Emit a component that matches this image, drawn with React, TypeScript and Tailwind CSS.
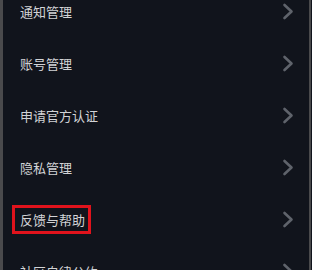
const items = ['通知管理', '账号管理', '申请官方认证', '隐私管理', '反馈与帮助', '社区自律公约'];

function Chevron() {
  return (
    <svg width="12" height="17" viewBox="0 0 12 17" className="shrink-0">
      <path d="M2.5 2 L9.5 8.5 L2.5 15" fill="none" stroke="#5f636b" strokeWidth="2.6" strokeLinecap="round" strokeLinejoin="round" />
    </svg>
  );
}

export default function App() {
  return (
    <div className="w-[312px] h-[270px] overflow-hidden flex bg-[#11141c]" style={{ fontFamily: '"Noto Sans CJK SC", "Noto Sans", sans-serif' }}>
      <div className="w-[3px] shrink-0 bg-[#4a4a4c]" />
      <div className="flex-1 flex flex-col -mt-[15px]">
        {items.map((label, i) => (
          <div key={label} className="h-[52px] shrink-0 flex items-center justify-between pl-[17px] pr-[15px]">
            {i === 4 ? (
              <span className="-ml-[8px] border-[3px] border-[#e0131c] pl-[5px] pr-[3px] py-[4px] text-[13px] leading-[15px] text-[#d2d3d6]">
                {label}
              </span>
            ) : (
              <span className="text-[13px] leading-[15px] text-[#d2d3d6]">{label}</span>
            )}
            <Chevron />
          </div>
        ))}
      </div>
      <div className="w-[2px] shrink-0 bg-[#4a4a4c]" />
      <div className="w-[1px] shrink-0 bg-[#11141c]" />
    </div>
  );
}
